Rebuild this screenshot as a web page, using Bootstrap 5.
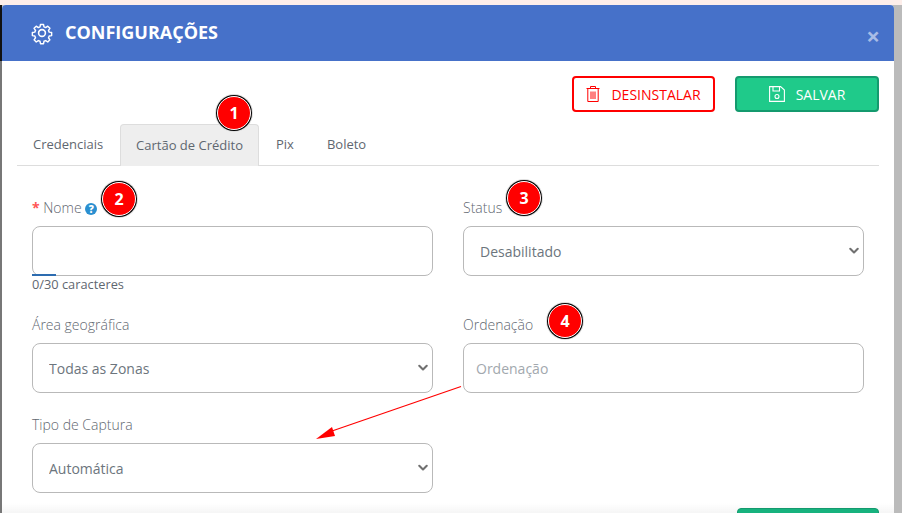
<!DOCTYPE html>
<html lang="pt-BR"><head><meta charset="utf-8"><title>Configurações</title>
<link href="https://cdn.jsdelivr.net/npm/bootstrap@5.3.0/dist/css/bootstrap.min.css" rel="stylesheet">
<style>
html,body{height:513px;overflow:hidden}
body{font-family:"Open Sans",sans-serif;background:#bbb;color:#6c757d;position:relative}
.backdrop-top{height:5px;background:#fdeeea}
.backdrop-row{height:508px}
.side-left{width:2px;background:linear-gradient(#111 0,#111 56px,#777 56px)}
.side-right{width:8px;background:#bbb}
.sheet{background:#fff;border-top-left-radius:4px;border-top-right-radius:4px;overflow:hidden}
.sheet-head{height:56px;background:#4671c9;color:#fff;padding:0 14px 0 28px}
.sheet-title{font-size:18px;font-weight:700;margin:0 0 0 11px}
.sheet-x{font-size:24px;font-weight:700;color:#a9bce6;line-height:1;margin-top:5px;margin-left:auto;padding:0;background:none;border:0}
.sheet-body{padding:15px 15px 0 15px;height:452px;position:relative}
.act{height:36px;font-size:14px;border-radius:4px;display:flex;align-items:center;padding:0;justify-content:center}
.act-del,.act-del:hover{width:143px;border:2px solid #f00;color:#f00;background:#fff;gap:11px}
.act-save,.act-save:hover{width:144px;border:2px solid #149a6e;color:#fff;background:#1fca8a;gap:11px;margin-left:20px}
.tabbar{border-bottom:1px solid #ddd;margin-top:12px;height:42px;padding:0}
.tabbar .nav-link{font-size:13px;color:#5f6770;padding:0 16px;height:42px;line-height:40px;border:0;border-radius:4px 4px 0 0}
.tabbar .nav-link.active{background:#eee;color:#5f6770;border:1px solid #ddd;border-bottom:0;width:139px;padding:0;text-align:center}
.tabbar .tab-pix{padding:0 17px}
.tabbar .tab-first{width:103px;padding:0 0 0 16px}
.formgrid{display:grid;grid-template-columns:401px 401px;grid-template-rows:125px 100px 118px;column-gap:30px;margin:0 0 0 15px}
.cell-one{padding-top:32px}
.cell-next{padding-top:24px}
.fld{height:50px;border:1px solid #b9b9b9;border-radius:8px;font-size:14px;color:#6c757d;padding:0 16px;background-color:#fff;box-shadow:none}
select.fld{background-image:url("data:image/svg+xml,%3csvg xmlns='http://www.w3.org/2000/svg' viewBox='0 0 16 16'%3e%3cpath fill='none' stroke='%23707070' stroke-linecap='round' stroke-linejoin='round' stroke-width='2.800' d='m3 5 5 5 5-5'/%3e%3c/svg%3e");background-position:right 3px center;background-size:12px 12px}
input.fld{padding:0 12px}
input.fld::placeholder{color:#a2a8ae}
.lab{font-size:14px;font-weight:300;color:#5f6770;margin:0;height:20px;line-height:20px;display:block}
.req{color:#f55;font-weight:700}
.fld-wrap{position:relative;margin-top:8px}
.lab + .fld{margin-top:8px}
.bar{position:absolute;left:0;bottom:0;width:24px;height:2px;background:#2d6cb0}
.cnt{font-size:12.800px;color:#5f6770;line-height:16px}
.pin{position:absolute;width:34px;height:34px;border-radius:50%;background:#f00;color:#fff;font-weight:700;font-size:16px;display:flex;align-items:center;justify-content:center;border:1px solid #fff;box-shadow:0 0 0 1px #000,0 0 0 2px #ddd}
.pin-1{left:217px;top:96px}.pin-2{left:102px;top:182px}.pin-3{left:507px;top:181px}.pin-4{left:548px;top:304px}
.qm{display:inline-flex;width:12px;height:12px;border-radius:50%;background:#2a8fd0;color:#fff;font-size:10px;font-weight:800;align-items:center;justify-content:center;vertical-align:0;line-height:1}
.arrow{position:absolute;left:0;top:0;pointer-events:none}
.foot-btn{position:absolute;left:737px;top:508px;width:142px;height:20px;background:#17b27e;border:1px solid #149a6e;border-radius:4px}
.foot-fade{position:absolute;left:2px;top:503px;width:892px;height:10px;background:linear-gradient(rgba(0,0,0,0),rgba(0,0,0,.04))}
</style></head><body>
<div class="backdrop-top"></div>
<div class="backdrop-row d-flex">
<div class="side-left"></div>
<div class="sheet flex-grow-1">
<div class="sheet-head d-flex align-items-center">
<svg width="24" height="24" viewBox="0 0 24 24" fill="none" stroke="#fff" stroke-width="1.600" stroke-linejoin="round"><circle cx="12" cy="12" r="3.400"/><path d="M10.300 2.500h3.400l.5 2.700 1.900.8 2.300-1.600 2.400 2.400-1.600 2.300.8 1.900 2.700.5v3.400l-2.700.5-.8 1.900 1.600 2.300-2.400 2.400-2.300-1.600-1.900.8-.5 2.700h-3.400l-.5-2.700-1.900-.8-2.300 1.600-2.400-2.400 1.600-2.300-.8-1.900-2.700-.5v-3.400l2.700-.5.8-1.900-1.600-2.300 2.400-2.400 2.300 1.600 1.900-.8z" transform="translate(1.200 1.200) scale(.9)"/></svg>
<h1 class="sheet-title">CONFIGURAÇÕES</h1>
<button type="button" class="sheet-x" aria-label="Fechar">×</button>
</div>
<div class="sheet-body">
<div class="d-flex justify-content-end">
<button type="button" class="btn act act-del"><svg width="14" height="16" viewBox="0 0 14 16" fill="none" stroke="#f00" stroke-width="1"><path d="M.5 2.500h13M4.500 2.500V.5h5v2M1.800 2.500v13h10.400v-13M5 5.500v7.500M7 5.500v7.500M9 5.500v7.500"/></svg><span>DESINSTALAR</span></button>
<button type="button" class="btn act act-save"><svg width="16" height="16" viewBox="0 0 16 16" fill="none" stroke="#fff" stroke-width="1.100"><path d="M.6.6h11l3.800 3.400v11.400H.6zM4 .6v4.400h6.500V.6"/><circle cx="8" cy="10.500" r="2"/></svg><span>SALVAR</span></button>
</div>
<ul class="nav tabbar">
<li class="nav-item"><a class="nav-link tab-first" href="#">Credenciais</a></li>
<li class="nav-item"><a class="nav-link active" href="#">Cartão de Crédito</a></li>
<li class="nav-item"><a class="nav-link tab-pix" href="#">Pix</a></li>
<li class="nav-item"><a class="nav-link" href="#">Boleto</a></li>
</ul>
<div class="formgrid">
<div class="cell-one"><label class="lab"><span class="req">*</span> Nome <span class="qm">?</span></label>
<div class="fld-wrap"><input class="form-control fld" type="text" aria-label="Nome"><div class="bar"></div></div>
<div class="cnt">0/30 caracteres</div></div>
<div class="cell-one"><label class="lab">Status</label><select class="form-select fld" aria-label="Status"><option>Desabilitado</option></select></div>
<div class="cell-next"><label class="lab">Área geográfica</label><select class="form-select fld" aria-label="Área geográfica"><option>Todas as Zonas</option></select></div>
<div class="cell-next"><label class="lab">Ordenação</label><input class="form-control fld" type="text" placeholder="Ordenação"></div>
<div class="cell-next"><label class="lab">Tipo de Captura</label><select class="form-select fld" aria-label="Tipo de Captura"><option>Automática</option></select></div>
</div>
</div>
</div>
<div class="side-right"></div>
</div>
<div class="foot-fade"></div>
<div class="foot-btn"></div>
<div class="pin pin-1">1</div><div class="pin pin-2">2</div><div class="pin pin-3">3</div><div class="pin pin-4">4</div>
<svg class="arrow" width="902" height="513" viewBox="0 0 902 513"><path d="M461 386.500 332 431" stroke="#f00" stroke-width="1.200" fill="none"/><path d="M316 439 332 427 335 436z" fill="#f00"/></svg>
</body></html>
